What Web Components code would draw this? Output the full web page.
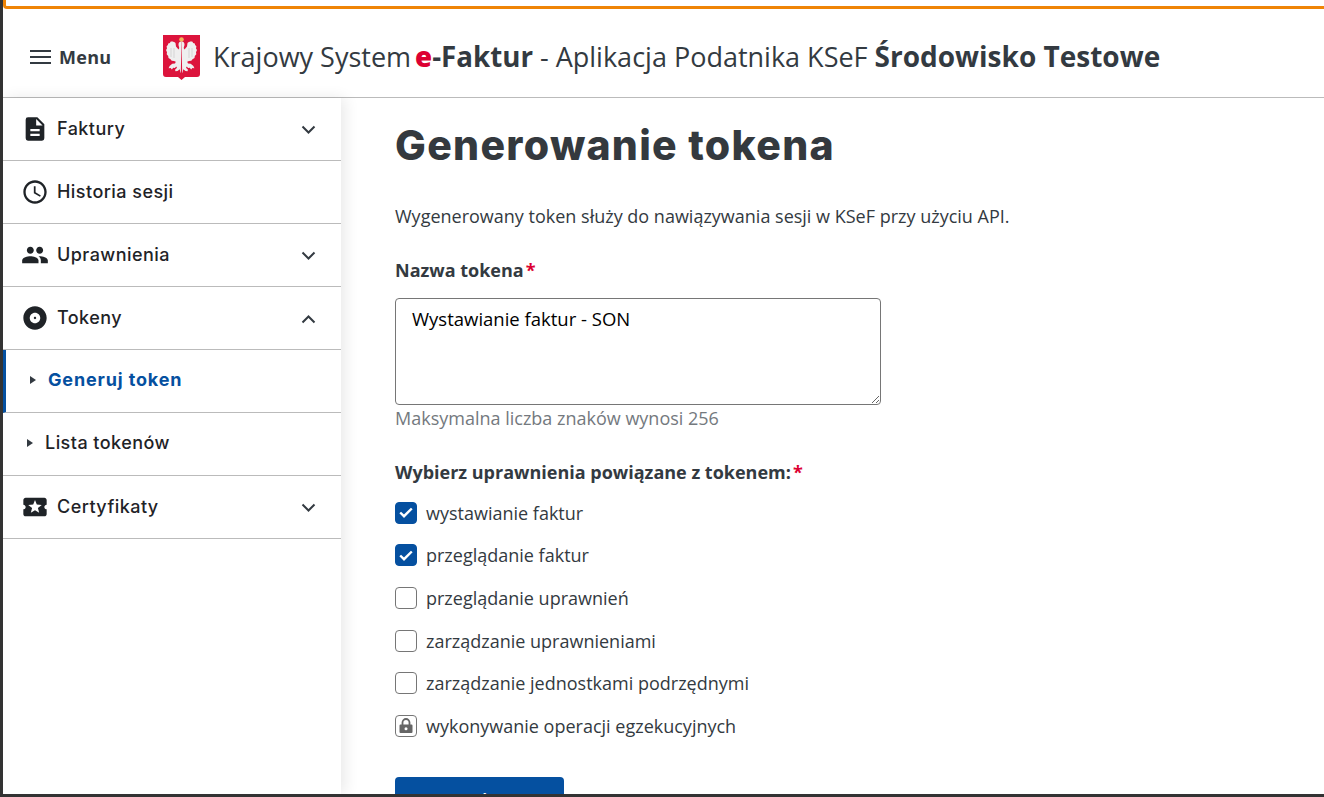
<!DOCTYPE html>
<html lang="pl">
<head>
<meta charset="utf-8">
<title>Generowanie tokena</title>
<style>
  html, body { margin: 0; height: 100%; overflow: hidden; background: #fff; }
  body { font-family: "Open Sans", "Liberation Sans", sans-serif; color: #333a41; }
</style>
</head>
<body>
<app-shell>
  <app-header slot="header"></app-header>
  <side-nav slot="nav">
    <nav-item icon="file" chevron="down">Faktury</nav-item>
    <nav-item icon="clock">Historia sesji</nav-item>
    <nav-item icon="people" chevron="down">Uprawnienia</nav-item>
    <nav-item icon="disc" chevron="up">Tokeny</nav-item>
    <nav-item sub active>Generuj token</nav-item>
    <nav-item sub>Lista tokenów</nav-item>
    <nav-item icon="cert" chevron="down">Certyfikaty</nav-item>
  </side-nav>
  <token-form slot="main"></token-form>
</app-shell>

<script>
// small helper, every element does the same thing in its constructor
function shadow(el, html) {
  el.attachShadow({ mode: "open" }).innerHTML = html;
}

const ICONS = {
  file: `<path d="M14 2H6a2 2 0 0 0-2 2v16a2 2 0 0 0 2 2h12a2 2 0 0 0 2-2V8l-6-6zm2 16H8v-2h8v2zm0-4H8v-2h8v2zm-3-5V3.5L18.5 9H13z"/>`,
  clock: `<path d="M11.99 2C6.47 2 2 6.48 2 12s4.47 10 9.99 10C17.52 22 22 17.52 22 12S17.52 2 11.99 2zM12 20c-4.42 0-8-3.58-8-8s3.58-8 8-8 8 3.58 8 8-3.58 8-8 8zm.5-13H11v6l5.25 3.15.75-1.23-4.5-2.67V7z"/>`,
  people: `<path d="M16 11c1.66 0 2.99-1.34 2.99-3S17.66 5 16 5s-3 1.34-3 3 1.34 3 3 3zm-8 0c1.66 0 2.99-1.34 2.99-3S9.66 5 8 5 5 6.34 5 8s1.34 3 3 3zm0 2c-2.33 0-7 1.17-7 3.5V19h14v-2.5C15 14.17 10.33 13 8 13zm8 0c-.29 0-.62.02-.97.05 1.16.84 1.97 1.97 1.97 3.45V19h6v-2.5c0-2.33-4.67-3.5-7-3.5z"/>`,
  disc: `<path d="M12 2C6.48 2 2 6.48 2 12s4.48 10 10 10 10-4.48 10-10S17.52 2 12 2zm0 14.5c-2.49 0-4.5-2.01-4.5-4.5S9.51 7.5 12 7.5s4.5 2.01 4.5 4.5-2.01 4.5-4.5 4.5zm0-5.5c-.55 0-1 .45-1 1s.45 1 1 1 1-.45 1-1-.45-1-1-1z"/>`,
  cert: `<path d="M22 10V6c0-1.11-.9-2-2-2H4c-1.1 0-1.99.89-1.99 2v4c1.1 0 1.99.9 1.99 2s-.89 2-2 2v4c0 1.1.9 2 2 2h16c1.1 0 2-.9 2-2v-4c-1.1 0-2-.9-2-2s.9-2 2-2zm-6.42 7L12 14.7 8.42 17l1.08-4.12-3.29-2.69 4.24-.25L12 6l1.54 3.95 4.24.25-3.29 2.69L15.58 17z"/>`
};

class AppShell extends HTMLElement {
  constructor() {
    super();
    shadow(this, `
      <style>
        :host { display: flex; flex-direction: column; height: 797px; box-sizing: border-box;
                border-left: 3px solid #333; border-bottom: 3px solid #333; overflow: hidden; background: #fff; }
        .strip { flex: none; height: 9px; box-sizing: border-box; border-bottom: 3px solid #ef8406;
                 border-left: 3px solid #ef8406; border-bottom-left-radius: 4px; }
        .body { flex: 1; display: flex; min-height: 0; }
      </style>
      <div class="strip"></div>
      <slot name="header"></slot>
      <div class="body">
        <slot name="nav"></slot>
        <slot name="main"></slot>
      </div>`);
  }
}

class AppHeader extends HTMLElement {
  constructor() {
    super();
    shadow(this, `
      <style>
        :host { display: flex; align-items: center; flex: none; height: 89px; box-sizing: border-box;
                border-bottom: 1px solid #bbb; padding: 9px 0 0 27px; color: #333a41; }
        .menu { display: flex; align-items: center; gap: 8px; width: 133px; font-weight: 700;
                font-size: 18px; letter-spacing: .3px; margin-bottom: 2px; }
        .menu svg { width: 21px; height: 14px; }
        .crest { width: 37px; height: 45px; margin-right: 13px; flex: none; }
        h1 { margin: 0 0 4px; font-size: 27px; font-weight: 400; white-space: nowrap; }
        b { font-weight: 700; font-size: 27.700px; }
        .e { color: #dc0032; margin-left: 4px; font-weight: 800; }
        .test { margin-left: 0; font-size: 28px; }
      </style>
      <div class="menu">
        <svg viewBox="0 0 21 14"><path d="M0 0h21v2H0zM0 6h21v2H0zM0 12h21v2H0z" fill="#333a41"/></svg>
        <span>Menu</span>
      </div>
      <svg class="crest" viewBox="0 0 37 45">
        <path d="M0 0h37v39a3 3 0 0 1-3 3H22l-3.500 3-3.500-3H3a3 3 0 0 1-3-3z" fill="#dc143c"/>
        <circle cx="18.500" cy="4.500" r="2.300" fill="#f0b95a"/>
        <g fill="#efefef">
          <path d="M18.500 6.500c-1.900 0-3 1.300-3 3 0 1.300.6 2.300.8 3.500l-.8 1.500-2.500-3-.5-3.500c-1.300-1.200-3.200-1.800-5-1.300l-.6 1.300-1.700.4-.3 1.700-1.300 1.200.4 2.200-1 1.600 1 2.200-.3 2 1.500 1.800.3 2 2 1.200 1.200 1.500 2.300.2 1.800.8-.8 1.700-2.700.3-2.700 2.200-1 2.200 2-.2 1.300 1.500 1.300-1.700 1.700.2 1.300-1.600.8 1.400-2 2 .5 1.400 2-.3 2.300-1.600.5 3 .5.8z"/>
          <path d="M18.500 6.500c1.900 0 3 1.300 3 3 0 1.300-.6 2.300-.8 3.500l.8 1.500 2.500-3 .5-3.500c1.300-1.200 3.200-1.800 5-1.300l.6 1.300 1.700.4.3 1.700 1.300 1.200-.4 2.200 1 1.600-1 2.200.3 2-1.500 1.800-.3 2-2 1.200-1.200 1.500-2.300.2-1.800.8.8 1.700 2.700.3 2.700 2.200 1 2.200-2-.2-1.300 1.500-1.300-1.700-1.700.2-1.300-1.600-.8 1.400 2 2-.5 1.400-2-.3-2.300-1.600-.5 3-.5.8z"/>
        </g>
        <path d="M8 13v9M11 13v10M29 13v9M26 13v10" stroke="#cfcfcf" stroke-width=".8" fill="none"/>
      </svg>
      <h1>Krajowy System<b class="e">e</b><b>-Faktur</b> - Aplikacja Podatnika KSeF <b class="test">Środowisko Testowe</b></h1>`);
  }
}

class SideNav extends HTMLElement {
  constructor() {
    super();
    shadow(this, `
      <style>
        :host { display: block; flex: none; width: 338px; box-shadow: 4px 0 14px rgba(0,0,0,.09); position: relative; z-index: 1; background: #fff; }
      </style>
      <slot></slot>`);
  }
}

class NavItem extends HTMLElement {
  constructor() {
    super();
    const icon = this.getAttribute("icon");
    const chev = this.getAttribute("chevron");
    const sub = this.hasAttribute("sub");
    const path = chev === "up" ? "M1.500 8.500 7.500 2.500l6 6" : "M1.500 1.500l6 6 6-6";
    shadow(this, `
      <style>
        :host { display: flex; align-items: center; height: 63px; box-sizing: border-box;
                border-bottom: 1px solid #bbb; padding-left: 17.500px; padding-bottom: 1px;
                font-family: Inter, "Noto Sans", sans-serif; font-size: 18px; letter-spacing: .45px; font-weight: 500; color: #1f2327; }
        :host([sub]) { padding-left: 24px; padding-bottom: 3px; }
        :host([active]) { border-left: 3px solid #0550a0; padding-left: 24px; color: #0550a0; font-weight: 700; letter-spacing: .85px; }
        .ic { width: 28px; height: 28px; fill: #1f2327; margin-right: 8.500px; flex: none; }
        .tri { width: 0; height: 0; border-left: 6px solid #333a41; border-top: 4px solid transparent;
               border-bottom: 4px solid transparent; margin-right: 12px; }
        .label { flex: 1; }
        .chev { width: 15px; height: 10px; margin: 2px 25px 0 0; fill: none; stroke: #333a41; stroke-width: 2; }
      </style>
      ${icon ? `<svg class="ic" viewBox="0 0 24 24">${ICONS[icon]}</svg>` : ""}
      ${sub ? `<span class="tri"></span>` : ""}
      <span class="label"><slot></slot></span>
      ${chev ? `<svg class="chev" viewBox="0 0 15 10"><path d="${path}"/></svg>` : ""}`);
  }
}

class CheckOption extends HTMLElement {
  constructor() {
    super();
    const check = this.hasAttribute("checked");
    const lock = this.hasAttribute("locked");
    shadow(this, `
      <style>
        :host { display: flex; align-items: center; gap: 9px; height: 42.600px; font-size: 18px; color: #333a41; }
        .box { width: 22px; height: 22px; box-sizing: border-box; border: 1px solid #767676; border-radius: 4px;
               flex: none; display: flex; align-items: center; justify-content: center; background: #fff; }
        :host([checked]) .box { background: #0550a0; border-color: #0550a0; }
        svg { display: block; }
      </style>
      <span class="box">
        ${check ? `<svg width="14" height="11" viewBox="0 0 14 11"><path d="M1.200 5.500 5 9.200 12.800 1.500" fill="none" stroke="#fff" stroke-width="2.400"/></svg>` : ""}
        ${lock ? `<svg width="14" height="16" viewBox="0 0 14 16"><path d="M3.500 7V4.500a3.500 3.500 0 0 1 7 0V7" fill="none" stroke="#666" stroke-width="1.800"/><path d="M1.500 6.500h11a1 1 0 0 1 1 1v6.500a1 1 0 0 1-1 1h-11a1 1 0 0 1-1-1V7.500a1 1 0 0 1 1-1z" fill="#666"/><circle cx="7" cy="10.700" r="1.500" fill="#fff"/></svg>` : ""}
      </span>
      <span><slot></slot></span>`);
  }
}

class TokenForm extends HTMLElement {
  constructor() {
    super();
    shadow(this, `
      <style>
        :host { display: block; flex: 1; padding: 0 0 0 54px; color: #333a41; min-width: 0; }
        h2 { margin: 0; padding-top: 22px; height: 50px; line-height: 50px; font-family: Inter, "Noto Sans", sans-serif;
             font-size: 41px; letter-spacing: 1.300px; font-weight: 800; color: #34393e; white-space: nowrap; }
        .lead { margin: 34px 0 0; font-size: 18px; line-height: 24px; }
        .lab { font-size: 18px; font-weight: 700; line-height: 24px; }
        .lab i { font-style: normal; color: #dc0032; margin-left: 2px; }
        .name { margin-top: 30px; }
        .area { margin-top: 16px; width: 486px; height: 107px; box-sizing: border-box; display: block;
                border: 1px solid #767676; border-radius: 4px; padding: 8px 16px; font: 18.500px/24px "Open Sans", sans-serif;
                color: #000; resize: vertical; background: #fff; outline: none; }
        .hint { margin-top: 1px; font-size: 18px; line-height: 24px; color: #74797e; }
        .perm { margin-top: 30px; margin-bottom: 7.600px; }
        .send { display: block; margin-top: 29.400px; width: 169px; height: 47px; box-sizing: border-box; border: 0; border-radius: 4px 4px 0 0;
                background: #0550a0; color: #fff; font: 700 18px Inter, sans-serif; letter-spacing: .5px; padding: 0; }
      </style>
      <h2>Generowanie tokena</h2>
      <p class="lead">Wygenerowany token służy do nawiązywania sesji w KSeF przy użyciu API.</p>
      <div class="lab name">Nazwa tokena<i>*</i></div>
      <textarea class="area">Wystawianie faktur - SON</textarea>
      <div class="hint">Maksymalna liczba znaków wynosi 256</div>
      <div class="lab perm">Wybierz uprawnienia powiązane z tokenem:<i>*</i></div>
      <check-option checked>wystawianie faktur</check-option>
      <check-option checked>przeglądanie faktur</check-option>
      <check-option>przeglądanie uprawnień</check-option>
      <check-option>zarządzanie uprawnieniami</check-option>
      <check-option>zarządzanie jednostkami podrzędnymi</check-option>
      <check-option locked>wykonywanie operacji egzekucyjnych</check-option>
      <button class="send">Generuj token</button>`);
  }
}

customElements.define("app-shell", AppShell);
customElements.define("app-header", AppHeader);
customElements.define("side-nav", SideNav);
customElements.define("nav-item", NavItem);
customElements.define("check-option", CheckOption);
customElements.define("token-form", TokenForm);
</script>
</body>
</html>
